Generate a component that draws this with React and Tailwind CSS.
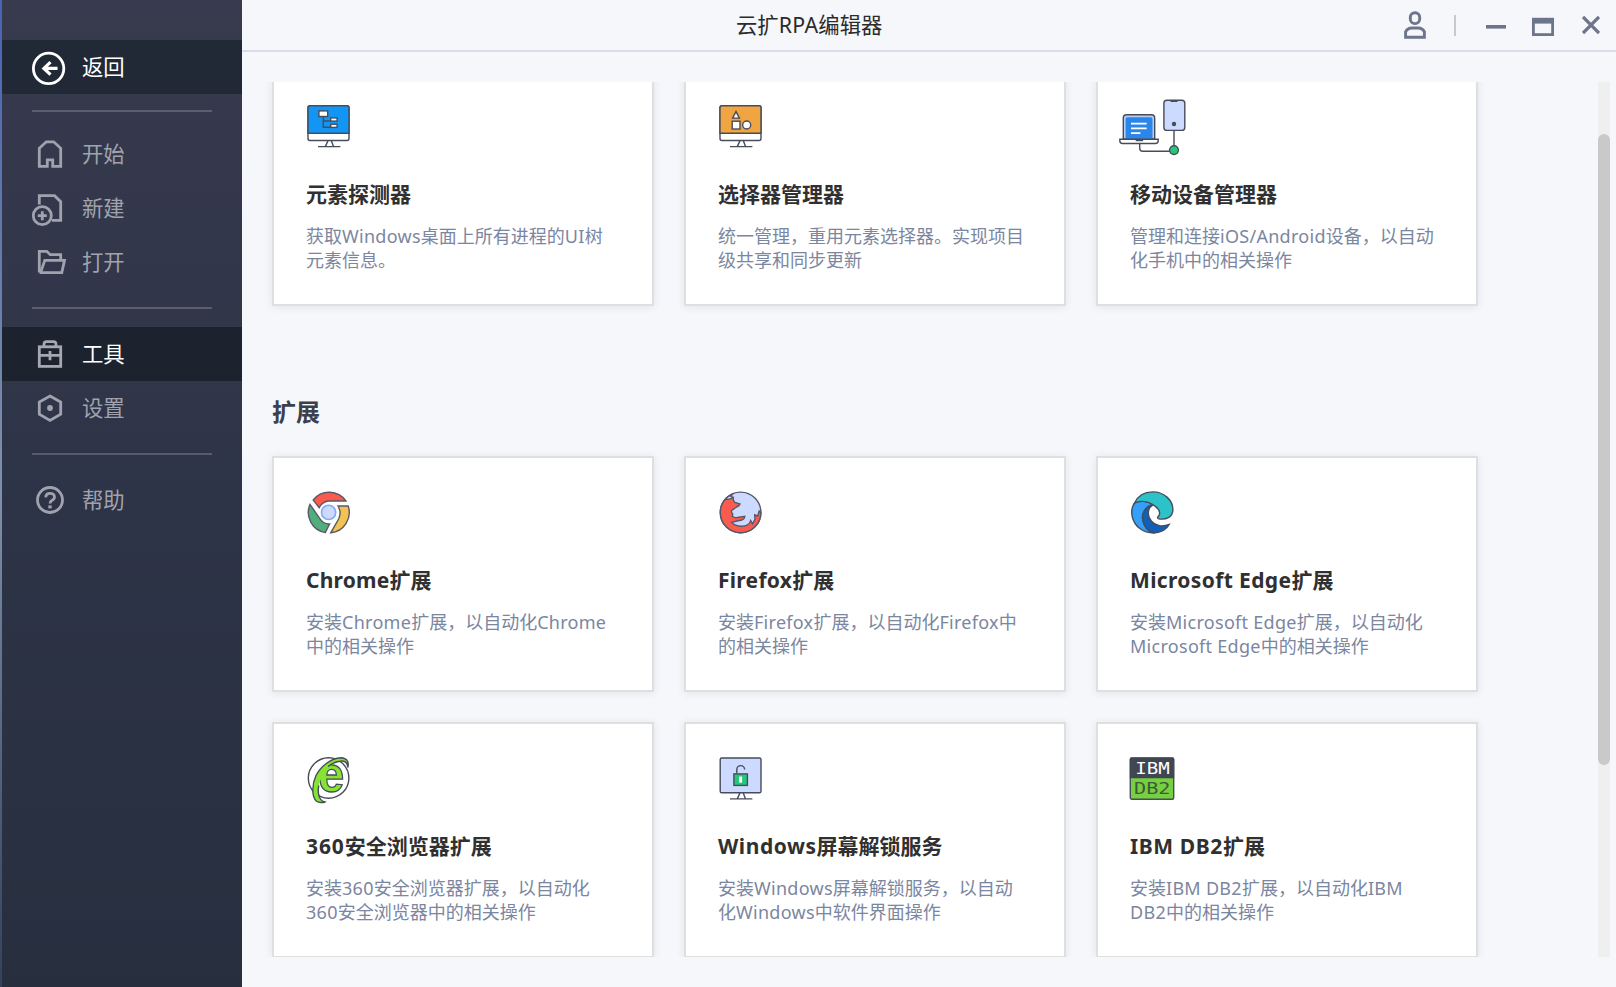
import React from "react";

const INK = "#474c5a";

/* ---------- sidebar icons ---------- */

function NavIcon({ children, className }) {
  return (
    <svg width="40" height="54" viewBox="0 0 40 54" fill="none" stroke="currentColor" strokeWidth="2.8" className={className}>
      {children}
    </svg>
  );
}

const BackIcon = () => (
  <NavIcon className="text-white">
    <circle cx="18.6" cy="28.4" r="15.2" />
    <path d="M27.5 28.4H13M20.5 22.2l-6.6 6.2 6.6 6.2" strokeWidth="3.2" />
  </NavIcon>
);
const HomeIcon = () => (
  <NavIcon>
    <path d="M9.3 38.3V20.3L16.3 13.8h7.4l7 6.5v18h-8V31.8h-5.4v6.5z" />
  </NavIcon>
);
const NewIcon = () => (
  <NavIcon>
    <path d="M9.3 22.5V13.7h15.2l6.2 6v18.6H22" />
    <circle cx="12.3" cy="33.7" r="9" />
    <path d="M12.3 29.2v9M7.8 33.7h9" />
  </NavIcon>
);
const OpenIcon = () => (
  <NavIcon>
    <path d="M9.3 36.6V15.3h7.4l3.6 3.4h10.4v5.6" />
    <path d="M9.6 36.6h22.2l2.7-12.2H14.8L10.6 36.6" />
  </NavIcon>
);
const ToolsIcon = () => (
  <NavIcon className="text-[#a5a8b2]">
    <rect x="9.3" y="19.8" width="21.4" height="19.6" />
    <path d="M9.3 28.3h21.4M20 24v9.2M14 19.8v-2.6q0-2.6 2.6-2.6h6.8q2.6 0 2.6 2.6v2.6" />
  </NavIcon>
);
const SettingsIcon = () => (
  <NavIcon>
    <path d="M20 15l10.7 6v12.3L20 39.4 9.3 33.3V21z" />
    <circle cx="20" cy="27" r="2.9" fill="currentColor" stroke="none" />
  </NavIcon>
);
const HelpIcon = () => (
  <NavIcon>
    <circle cx="20" cy="27" r="12.5" />
    <path d="M15.7 24.4q.2-4 4.4-4t4.4 3.6q0 2.1-2.4 3.2-2 1-2 3.2" />
    <path d="M20 32.4v3" strokeWidth="3.4" />
  </NavIcon>
);

/* ---------- card icons ---------- */

function CardIcon({ children }) {
  return (
    <svg width="48" height="48" viewBox="0 0 48 48" fill="none" stroke={INK} strokeWidth="1.4" className="block overflow-visible">
      {children}
    </svg>
  );
}

function Stand({ y = 0 }) {
  return <path d={`M22 ${36.6 + y}l-2.7 6M25.3 ${36.6 + y}l2.2 6M12 ${42.6 + y}h22.4`} />;
}

const InspectorIcon = () => (
  <CardIcon>
    <rect x="2" y="1.7" width="41" height="34.8" rx="2" fill="#fff" />
    <path d="M2 29.3V3.7q0-2 2-2h37q2 0 2 2v25.6z" fill="#1296f5" />
    <Stand />
    <path d="M17.3 12.7v10.6h7M17.3 17h7" />
    <rect x="12.9" y="6.9" width="8.8" height="5.6" fill="#fff" />
    <rect x="24.7" y="13.9" width="6.4" height="3.2" fill="#fff" />
    <rect x="24.7" y="20.2" width="6.4" height="3.2" fill="#fff" />
  </CardIcon>
);

const SelectorIcon = () => (
  <CardIcon>
    <rect x="2" y="1.7" width="41" height="34.8" rx="2" fill="#fff" />
    <path d="M2 29.3V3.7q0-2 2-2h37q2 0 2 2v25.6z" fill="#f1a540" />
    <Stand />
    <path d="M18 7.6l-3.4 6.5h6.800z" fill="#fff" />
    <rect x="14.2" y="17.2" width="7.8" height="7.8" fill="#fff" />
    <circle cx="28.7" cy="21" r="4" fill="#fff" />
  </CardIcon>
);

const MobileIcon = () => (
  <CardIcon>
    <path d="M44 26.7v15M9.7 39.7V44q0 3.2 3.2 3.2H40" />
    <rect x="33.9" y="-3.8" width="20.9" height="30.2" rx="3" fill="#cbdafe" />
    <path d="M40.5-3h7" strokeWidth="2" />
    <circle cx="44" cy="20" r="2.2" fill={INK} stroke="none" />
    <path d="M-6.7 35V14q0-3.2 3.2-3.2h25q3.2 0 3.2 3.2v21z" fill="#b7cbf6" />
    <path d="M-4.4 34.8V15q0-1.8 1.8-1.8h23.3q1.8 0 1.8 1.8v19.8z" fill="#2b86ea" stroke="none" />
    <path d="M1 19.6h15.7M1 24.4h15.7M1 29.1h9.4" stroke="#fff" strokeWidth="1.6" />
    <path d="M-10.2 35.2h38.4v1.6q0 2.7-2.7 2.7h-33q-2.7 0-2.7-2.7z" fill="#fff" />
    <path d="M5.7 36.2h7.4" strokeWidth="2" />
    <circle cx="44" cy="46.1" r="4.4" fill="#25c878" />
  </CardIcon>
);

const ChromeIcon = () => (
  <CardIcon>
    <g stroke="#5a5a66">
      <path d="M7.2 10A20.4 20.4 0 0 1 39.9 11H23q-6.5.3-9.8 6.6z" fill="#fb5a4e" />
      <path d="M4 14.4A20.4 20.4 0 0 0 19.2 42.6l4.4-8.6q-6 .2-9.4-4.8z" fill="#4fae7c" />
      <path d="M32 16h10.2A20.4 20.4 0 0 1 24.8 42.8L32.6 29q3.2-6.5-.6-13z" fill="#f2c352" />
    </g>
    <circle cx="22.6" cy="22.4" r="7.1" fill="#cbdafe" stroke="#82aaf6" strokeWidth="1.6" />
  </CardIcon>
);

const FirefoxIcon = () => (
  <CardIcon>
    <g stroke="#555869">
      <circle cx="22.6" cy="22.4" r="20.3" fill="#cbdafe" />
      <path
        d="M7.4 9.2Q11 9.8 15.3 7.7Q14.8 10.5 17 12.5L22 14Q21.5 15.8 18.5 17L13.7 20.5Q12.8 22 14.8 24L14.2 26.2Q16.5 28 19.5 27.5L26.8 26.3Q26.5 29.5 23 30.2L20 30.8L13.7 32.4Q17 36 23 36.2Q31 36.5 32.7 30.6L34.5 33.8L37 29.3L36.7 24.8L39.7 26L41.2 21L42.9 22.4A20.3 20.3 0 0 1 2.3 22.4Q2.3 14.5 7.4 9.2z"
        fill="#fb5a4e"
      />
      <path d="M7.4 9.2Q10.5 5.6 14.8 3.8L12.8 6.2L15.3 7.7" />
    </g>
  </CardIcon>
);

const EdgeIcon = () => (
  <CardIcon>
    <path d="M4.6 13C1.5 17 1.3 22 2.2 26.5C4.5 36.5 13 43 24 43C19 41.6 14.3 37 12.9 30.5C11.3 24 15 16.5 22.9 14.8C18 10.5 9 10 4.6 13z" fill="#35a0fb" />
    <path d="M22.9 14.8C15 16.5 11.3 24 12.9 30.5C14.3 37 19 41.6 24 43C31.5 42.6 37 38.6 39.2 34.5C32.5 37.2 25.5 36 21.5 31.2C17 26 17 18.5 22.9 14.8z" fill="#0f60bb" />
    <path d="M4.6 13C8 5.5 15 1.9 22.7 1.9C34.5 1.9 43 10.5 42.9 20C42.7 27 36.5 29.6 30 29.1C27.3 28.9 26.9 27.5 28.6 26C31.5 22.5 28 17.5 22.9 14.6C17 10.6 9 10.6 4.6 13z" fill="#2bc3c9" />
  </CardIcon>
);

const Browser360Icon = () => (
  <CardIcon>
    <circle cx="22.6" cy="22" r="20.3" />
    <text
      x="12.2"
      y="36"
      textLength="26"
      lengthAdjust="spacingAndGlyphs"
      fill="#86e233"
      strokeWidth="1.3"
      className="font-['Liberation_Sans',sans-serif] text-[50px] font-bold"
    >
      e
    </text>
    <path d="M41.8 11.5C43.4 5.5 40.5 2 35 1.7C24.5 2 14.5 11 10 19.5C6 28 5.3 40.5 10.5 45.2C13 47 17.5 46.6 18.8 46C12.5 44.5 11.4 36 12.8 29.5C15.5 18 25 6.5 35.5 5C39.8 4.6 41.8 8 41.8 11.5z" fill="#86e233" stroke="none" />
    <path d="M41.8 11.5C43.4 5.5 40.5 2 35 1.7C24.5 2 14.5 11 10 19.5C6 28 5.3 40.5 10.5 45.2C13 47 17.5 46.6 18.8 46C12.5 44.5 11.4 36 12.8 29.5M22 10.5C26.5 7 31 5.2 35.5 5C39.8 4.6 41.8 8 41.8 11.5" />
  </CardIcon>
);

const UnlockIcon = () => (
  <CardIcon>
    <rect x="2.2" y="2" width="40.8" height="34.8" rx="1.6" fill="#cbdafe" />
    <Stand y={0.3} />
    <path d="M18.8 17.5V13.5a3.9 3.9 0 0 1 7.8 0" />
    <rect x="15.9" y="17.9" width="13.5" height="11.5" fill="#25c878" />
    <rect x="21.1" y="20.6" width="3" height="6" fill="#fff" stroke="none" />
  </CardIcon>
);

const Db2Icon = () => (
  <CardIcon>
    <rect x="0.3" y="1.9" width="43.4" height="41.3" rx="1.5" fill="#76d03f" />
    <path d="M-.2 22.3V3q0-1.6 1.6-1.6h41.2q1.6 0 1.6 1.6v19.3z" fill="#414653" stroke="none" />
    <g stroke="none" className="font-['DejaVu_Sans_Mono',monospace] text-[15px]">
      <text x="5.2" y="18.2" textLength="34.5" lengthAdjust="spacingAndGlyphs" fill="#fff">IBM</text>
      <text x="4" y="38" textLength="36.5" lengthAdjust="spacingAndGlyphs" fill="#3d5a3a">DB2</text>
    </g>
  </CardIcon>
);

/* ---------- sidebar ---------- */

function NavItem({ icon, label, tone = "text-[#a0a3ad]", bg = "", labelClass = "" }) {
  return (
    <div className={`flex h-[54px] items-center gap-3 pl-7 ${tone} ${bg}`}>
      {icon}
      <span className={`text-[21.33px] leading-8 ${labelClass}`}>{label}</span>
    </div>
  );
}

function Sidebar() {
  return (
    <aside className="flex w-60 shrink-0 flex-col bg-linear-to-b from-[#383a4e] via-[#2e3447] to-[#272f3f] pt-10">
      <NavItem icon={<BackIcon />} label="返回" tone="text-white" bg="bg-[#222936]" />
      <div className="mx-[30px] my-4 h-0.5 bg-[#5c5e6e]" />
      <NavItem icon={<HomeIcon />} label="开始" labelClass="pb-0.5" />
      <NavItem icon={<NewIcon />} label="新建" labelClass="pb-0.5" />
      <NavItem icon={<OpenIcon />} label="打开" labelClass="pb-0.5" />
      <div className="mx-[30px] mt-[17px] mb-[18px] h-0.5 bg-[#5a5d6c]" />
      <NavItem icon={<ToolsIcon />} label="工具" tone="text-white" bg="bg-[#1c232e]" />
      <NavItem icon={<SettingsIcon />} label="设置" />
      <div className="mx-[30px] my-[18px] h-0.5 bg-[#575b6a]" />
      <NavItem icon={<HelpIcon />} label="帮助" />
    </aside>
  );
}

/* ---------- header ---------- */

function Header() {
  return (
    <header className="flex h-[52px] shrink-0 border-b-2 border-[#d9dde8] pl-[494px] text-[#6c758a]">
      <h1 className="text-[21.33px] leading-[50px] whitespace-nowrap text-[#2b2b2b]">
        云扩<span className="tracking-[0.3px]">RPA</span>编辑器
      </h1>
      <div className="ml-auto flex items-center pr-4">
        <svg width="24" height="50" viewBox="0 0 24 50" fill="none" stroke="currentColor" strokeWidth="2.9">
          <rect x="7.3" y="12.8" width="9.4" height="10.8" rx="4.6" />
          <path d="M2.6 37.2v-5.4q2-3.8 6.2-3.8h6.4q4.2 0 6.2 3.8v5.4z" />
        </svg>
        <div className="ml-[27px] h-[21px] w-0.5 bg-[#c9c9cb]" />
        <svg width="20" height="50" viewBox="0 0 20 50" className="ml-[30px]">
          <rect x="0" y="25" width="20" height="3.6" fill="currentColor" />
        </svg>
        <svg width="22" height="50" viewBox="0 0 22 50" fill="none" stroke="currentColor" className="ml-[26px]">
          <rect x="1.4" y="19.2" width="19.2" height="15.4" strokeWidth="2.8" />
          <path d="M0 20.8h22" strokeWidth="5.6" />
        </svg>
        <svg width="18" height="50" viewBox="0 0 18 50" stroke="currentColor" strokeWidth="3.2" className="ml-7">
          <path d="M1 17l16 16M17 17L1 33" />
        </svg>
      </div>
    </header>
  );
}

/* ---------- content ---------- */

const tools = [
  { Icon: InspectorIcon, title: "元素探测器", lines: ["获取Windows桌面上所有进程的UI树", "元素信息。"] },
  { Icon: SelectorIcon, title: "选择器管理器", lines: ["统一管理，重用元素选择器。实现项目", "级共享和同步更新"] },
  { Icon: MobileIcon, title: "移动设备管理器", lines: ["管理和连接iOS/Android设备，以自动", "化手机中的相关操作"] },
];

const extensions = [
  { Icon: ChromeIcon, latin: "Chrome", tracking: "tracking-[0.2px]", title: "扩展", lines: ["安装Chrome扩展，以自动化Chrome", "中的相关操作"] },
  { Icon: FirefoxIcon, latin: "Firefox", tracking: "tracking-[0.28px]", title: "扩展", lines: ["安装Firefox扩展，以自动化Firefox中", "的相关操作"] },
  { Icon: EdgeIcon, latin: "Microsoft Edge", tracking: "tracking-[0.37px]", title: "扩展", lines: ["安装Microsoft Edge扩展，以自动化", "Microsoft Edge中的相关操作"] },
  { Icon: Browser360Icon, latin: "360", tracking: "tracking-[0.9px]", title: "安全浏览器扩展", lines: ["安装360安全浏览器扩展，以自动化", "360安全浏览器中的相关操作"] },
  { Icon: UnlockIcon, latin: "Windows", tracking: "tracking-[0.55px]", title: "屏幕解锁服务", lines: ["安装Windows屏幕解锁服务，以自动", "化Windows中软件界面操作"] },
  { Icon: Db2Icon, latin: "IBM DB2", tracking: "tracking-[0.6px]", title: "扩展", lines: ["安装IBM DB2扩展，以自动化IBM", "DB2中的相关操作"] },
];

/* Latin runs get slightly looser tracking than the Chinese text around them. */
function MixedText({ text }) {
  return text.split(/([\x20-\x7e]+)/).map((part, i) =>
    i % 2 ? <span key={i} className="tracking-[0.28px]">{part}</span> : part
  );
}

function Card({ Icon, latin, tracking, title, lines }) {
  return (
    <article className="h-[236px] border-2 border-[#dedfdf] bg-white px-8 pt-8 shadow-[0_1px_8px_rgba(60,60,80,0.1)]">
      <Icon />
      <h3 className="mt-[27px] text-[21px] leading-[30px] font-bold whitespace-nowrap text-[#303030]">
        {latin && <span className={tracking}>{latin}</span>}
        {title}
      </h3>
      <p className="mt-[15px] text-[18px] leading-6 whitespace-nowrap text-[#7b869f]">
        {lines.map((line) => (
          <span key={line} className="block"><MixedText text={line} /></span>
        ))}
      </p>
    </article>
  );
}

function CardGrid({ items }) {
  return (
    <div className="grid grid-cols-[repeat(3,382px)] gap-[30px]">
      {items.map((item) => (
        <Card key={item.lines[0]} {...item} />
      ))}
    </div>
  );
}

export default function App() {
  return (
    <div className="flex h-[987px] w-[1616px] overflow-hidden bg-[#f5f7fb] font-['Noto_Sans','Noto_Sans_CJK_SC',sans-serif]">
      <div className="w-0.5 shrink-0 bg-linear-to-b from-[#4a63b0] via-[#7f90a8] to-[#33415c]" />
      <Sidebar />
      <main className="flex min-w-0 flex-1 flex-col">
        <Header />
        <div className="mt-[30px] flex h-[875px] justify-between pr-1.5">
          <div className="h-full w-[1270px] overflow-hidden pl-[30px]">
            <div className="-mt-3">
              <CardGrid items={tools} />
              <h2 className="mt-[86px] mb-6 text-[24px] leading-10 font-bold text-[#3c404c]">扩展</h2>
              <CardGrid items={extensions} />
            </div>
          </div>
          <div className="h-full w-3 bg-[#efefef] pt-[52px]">
            <div className="h-[631px] rounded-full bg-[#c9c9c9]" />
          </div>
        </div>
      </main>
    </div>
  );
}
